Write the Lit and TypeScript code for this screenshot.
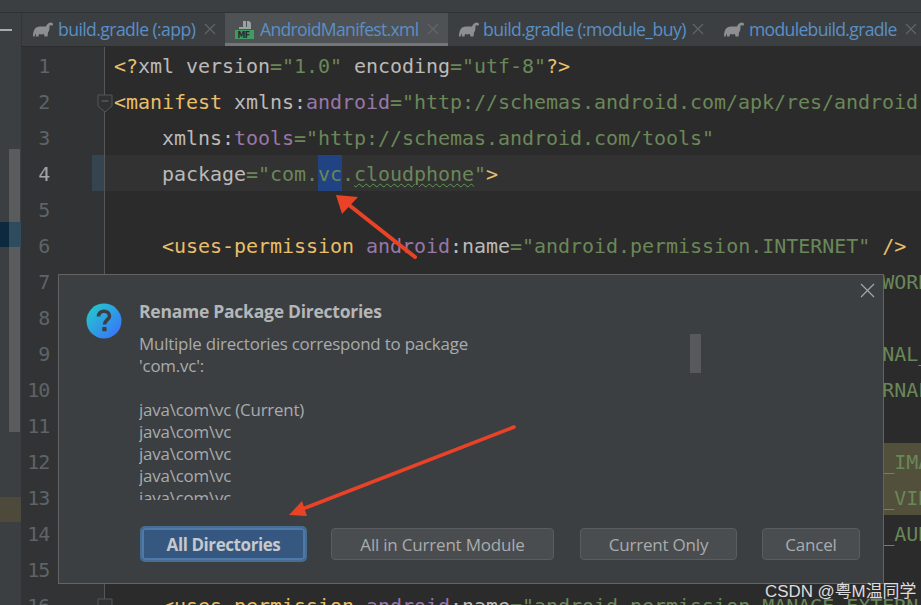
import { LitElement, html, css, svg } from "lit";
import { customElement } from "lit/decorators.js";

const perm = (name: string, hi = false) => html`${"    "}<span class="tag">&lt;uses-permission</span> <span class="ns">android</span><span class="at">:name</span><span class="str">="</span><span class="str ${hi ? "hl" : ""}">android.permission.${name}</span><span class="str">"</span> <span class="tag">/&gt;</span>`;

const gradle = svg`<svg class="ticon" width="22" height="15" viewBox="0 0 22 15"><path fill="#8c8e90" d="M1 14.500C1 8.500 3 4.500 8 4.500L14 4.500C15 2 17 .5 19 .5C20.500 .5 21 1.500 21 2.500C21 3.500 20 3.900 19 3.500C18 3 17.500 3.500 17.500 4.500C17.500 7.500 17 9.500 16 10.500L15.500 14.500H12.500L12 12C10 12.500 8.500 12.500 7 12L6.500 14.500H4L3.800 11.500C3 12.500 2.800 13.500 2.700 14.500Z"/></svg>`;

const manifestIcon = svg`<svg class="ticon" width="20" height="19" viewBox="0 0 20 19"><path fill="#9da0a2" d="M8 1h3v6H8zM12 1h2l2 2v4h-4z"/><path fill="#9da0a2" d="M4 7h12v2H4z"/><rect y="10" x="0" width="19" height="9" fill="#3f9c62"/><text x="2.500" y="18" font-family="'DejaVu Sans',sans-serif" font-size="8" font-weight="700" fill="#2b2b2b">MF</text></svg>`;

const fold = (minus: boolean) => svg`<svg class="fold" width="16" height="19" viewBox="0 0 16 19"><path d="M1 1h14v11l-7 6-7-6z" fill="#2f3133" stroke="#555759"/>${minus ? svg`<path d="M4.500 7h7" stroke="#6b6d6f"/>` : ""}</svg>`;

const lines = [
  html`<span class="tag">&lt;?</span><span class="at">xml version</span><span class="str">="1.0"</span> <span class="at">encoding</span><span class="str">="utf-8"</span><span class="tag">?&gt;</span>`,
  html`<span class="tag">&lt;manifest</span> <span class="at">xmlns:</span><span class="ns">android</span><span class="str">="http://schemas.android.com/apk/res/android"</span>`,
  html`${"    "}<span class="at">xmlns:</span><span class="ns">tools</span><span class="str">="http://schemas.android.com/tools"</span>`,
  html`${"    "}<span class="at">package</span><span class="str">="com.</span><span class="sel str">vc</span><span class="str">.</span><span class="str wavy">cloudphone</span><span class="str">"</span><span class="tag">&gt;</span>`,
  html``,
  perm("INTERNET"),
  perm("ACCESS_NETWORK_STATE"),
  html``,
  perm("READ_EXTERNAL_STORAGE"),
  perm("WRITE_EXTERNAL_STORAGE"),
  html``,
  perm("READ_MEDIA_IMAGES", true),
  perm("READ_MEDIA_VIDEO", true),
  perm("READ_MEDIA_AUDIO"),
  html``,
  perm("MANAGE_EXTERNAL_STORAGE"),
];

const tabs = [
  { label: "build.gradle (:app)", icon: gradle, w: 203, gap: 4, active: false, tight: false },
  { label: "AndroidManifest.xml", icon: manifestIcon, w: 223, gap: 5, active: true, tight: true },
  { label: "build.gradle (:module_buy)", icon: gradle, w: 265, gap: 3, active: false, tight: false },
  { label: "modulebuild.gradle", icon: gradle, w: 213, gap: 4, active: false, tight: true },
];

@customElement("app-root")
export class AppRoot extends LitElement {
  static styles = css`
    :host { display: block; width: 921px; height: 605px; }
    .root { position: relative; width: 921px; height: 605px; overflow: hidden; background: #3c3f41; display: flex; flex-direction: column; }
    .top { height: 12px; flex: none; background: #3c3f41; border-bottom: 1px solid #2f3133; }
    .tabbar { height: 33px; flex: none; display: flex; background: #3c3f41; font: 17.6px "Open Sans", sans-serif; letter-spacing: -0.58px; color: #5a8fc6; }
    .tabside { width: 21px; flex: none; border-right: 1px solid #333537; display: flex; align-items: center; }
    .dash { width: 12px; height: 2px; background: #a9abad; }
    .tab { flex: none; display: flex; align-items: center; padding-left: 10px; box-sizing: border-box; position: relative; white-space: nowrap; }
    .tab.active { background: #4e5254; box-shadow: inset 0 -3px 0 #74777a; }
    .tab.tight { letter-spacing: -0.69px; }
    .ticon { flex: none; }
    .label { padding-bottom: 2px; }
    .x { position: absolute; right: 9px; top: 10px; }
    .body { flex: 1; min-height: 0; display: flex; }
    .side { width: 21px; flex: none; position: relative; background: #3c3f41; }
    .thumb { position: absolute; left: 9px; width: 11px; top: 103px; height: 283px; background: #595b5d; }
    .mark1 { position: absolute; left: 0; width: 9px; top: 176px; height: 25px; background: #0d293e; }
    .mark2 { position: absolute; left: 9px; width: 12px; top: 176px; height: 25px; background: #2f4b5e; }
    .mark3 { position: absolute; left: 0; width: 21px; top: 451px; height: 25px; background: #4e4a3b; }
    .editor { flex: 1; min-width: 0; background: #2b2b2b; padding-top: 1px; overflow: hidden; position: relative; }
    .row { height: 36px; display: flex; position: relative; }
    .gut { width: 84px; flex: none; box-sizing: border-box; background: #313335; border-right: 1px solid #555759; padding-right: 55px; text-align: right; font: 20px/38px "DejaVu Sans Mono", monospace; color: #606366; letter-spacing: -1.2px; }
    .row.cur .gut { color: #a4a3a3; background: linear-gradient(to right, #313335 71px, #35454f 71px); }
    .code { flex: 1; min-width: 0; padding-left: 9px; font: 20px/39px "DejaVu Sans Mono", monospace; letter-spacing: -0.04px; white-space: pre; color: #a9b7c6; }
    .row.cur .code { background: #323232; }
    .fold { position: absolute; left: 76px; top: 11px; }
    .tag { color: #e8bf6a; }
    .at { color: #bababa; }
    .ns { color: #9876aa; }
    .str { color: #6a8759; }
    .sel { background: #214283; display: inline-block; height: 36px; }
    .hl { background: #52503a; display: inline-block; height: 36px; }
    .wavy { text-decoration: underline wavy #5f9a4f 1px; text-underline-offset: 2px; }
    .dialog { position: absolute; left: 58px; top: 274px; width: 826px; height: 310px; box-sizing: border-box; border: 1px solid #646464; background: #3c3f41; display: flex; flex-direction: column; padding: 26px 23px 23px 27px; font: 16.9px "Open Sans", sans-serif; letter-spacing: -0.2px; color: #a9abad; }
    .content { display: flex; gap: 17px; flex: 1; min-height: 0; }
    .qicon { flex: none; margin-top: 2px; }
    .main { flex: 1; min-width: 0; position: relative; }
    .title { font-weight: 700; font-size: 17.5px; line-height: 20px; margin-bottom: 12px; color: #b4b6b8; letter-spacing: -0.25px; }
    .msg { height: 167px; overflow: hidden; line-height: 22px; white-space: pre; }
    .scrollthumb { position: absolute; left: 551px; top: 33px; width: 11px; height: 39px; background: #58595b; }
    .close { position: absolute; right: 8px; top: 8px; }
    .buttons { display: flex; align-items: center; font-size: 17px; }
    .btn { flex: none; height: 32px; box-sizing: border-box; border: 1px solid #5a5d5f; border-radius: 4px; background: #4a4d4f; color: #a9abad; display: flex; align-items: center; justify-content: center; }
    .b1 { width: 163px; margin: 0 26px 0 56px; background: #365880; border: 2px solid #4f7aa8; outline: 2px solid #466d94; border-radius: 3px; color: #c6c9cb; font-weight: 700; letter-spacing: -0.42px; outline-offset: 0; }
    .b2 { width: 223px; margin-right: 26px; }
    .b3 { width: 157px; margin-right: 25px; }
    .b4 { width: 98px; }
    .arrows { position: absolute; left: 0; top: 0; pointer-events: none; }
    .wm { position: absolute; left: 765px; top: 577px; font: 16.9px "Liberation Sans", "Noto Sans CJK SC", sans-serif; color: #dcdcdc; text-shadow: 0 0 1px #333; white-space: nowrap; }
  `;

  render() {
    return html`<div class="root">
      <div class="top"></div>
      <div class="tabbar">
        <div class="tabside"><div class="dash"></div></div>
        ${tabs.map(t => html`<div class="tab ${t.active ? "active" : ""} ${t.tight ? "tight" : ""}" style="width:${t.w}px;gap:${t.gap}px">${t.icon}<span class="label">${t.label}</span>
          <svg class="x" width="12" height="12" viewBox="0 0 12 12"><path d="M1 1l10 10M11 1L1 11" stroke="#626567" stroke-width="1.200"/></svg></div>`)}
      </div>
      <div class="body">
        <div class="side"><div class="thumb"></div><div class="mark1"></div><div class="mark2"></div><div class="mark3"></div></div>
        <div class="editor">
          ${lines.map((l, i) => html`<div class="row ${i === 3 ? "cur" : ""}"><div class="gut">${i + 1}</div><div class="code">${l}</div>${i === 1 || i === 15 ? fold(i === 1) : ""}</div>`)}
        </div>
      </div>
      <div class="dialog">
        <div class="content">
          <svg class="qicon" width="36" height="36" viewBox="0 0 36 36">
            <defs><linearGradient id="qg" x1="0" y1="0" x2="1" y2="1"><stop offset="0" stop-color="#21d0c8"/><stop offset="1" stop-color="#3a6cff"/></linearGradient></defs>
            <circle cx="18" cy="18" r="17.500" fill="url(#qg)"/>
            <path d="M12.500 13.500c0-3.300 2.400-5.300 5.500-5.300s5.500 2 5.500 4.800c0 4-5 4-5 8.500" fill="none" stroke="#3c3f41" stroke-width="3.600"/>
            <rect x="16.200" y="24" width="4.400" height="4.200" rx=".8" fill="#3c3f41"/>
          </svg>
          <div class="main">
            <div class="title">Rename Package Directories</div>
            <div class="msg">Multiple directories correspond to package
'com.vc':

java\\com\\vc (Current)
java\\com\\vc
java\\com\\vc
java\\com\\vc
java\\com\\vc
java\\com\\vc</div>
            <div class="scrollthumb"></div>
          </div>
        </div>
        <div class="buttons">
          <div class="btn b1">All Directories</div>
          <div class="btn b2">All in Current Module</div>
          <div class="btn b3">Current Only</div>
          <div class="btn b4">Cancel</div>
        </div>
        <svg class="close" width="15" height="15" viewBox="0 0 15 15"><path d="M1 1l13 13M14 1L1 14" stroke="#a4a6a8" stroke-width="1.200"/></svg>
      </div>
      <svg class="arrows" width="921" height="605" viewBox="0 0 921 605">
        <path d="M415 257L349 205" stroke="#ea4227" stroke-width="4" stroke-linecap="round"/>
        <path d="M336 195L358 197L342 214z" fill="#ea4227"/>
        <path d="M514 427L305 508" stroke="#ea4227" stroke-width="3.500" stroke-linecap="round"/>
        <path d="M289 515L302 501L307 516z" fill="#ea4227"/>
      </svg>
      <div class="wm">CSDN @粤M温同学</div>
    </div>`;
  }
}
